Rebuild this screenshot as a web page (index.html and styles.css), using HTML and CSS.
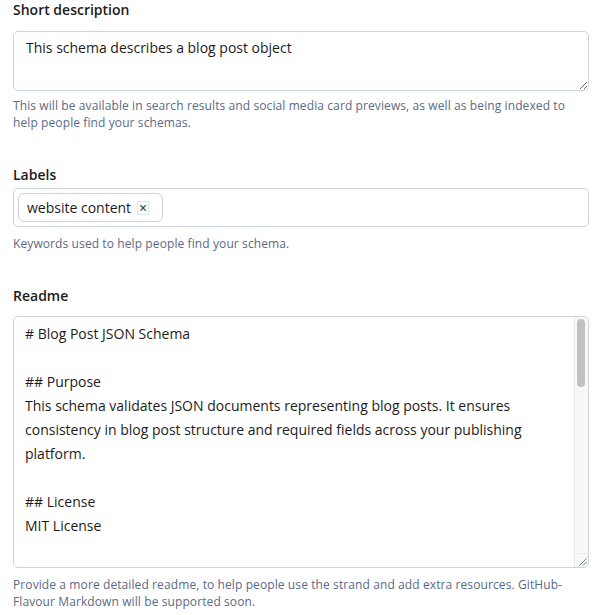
FILE: index.html
```html
<!DOCTYPE html>
<html lang="en">
<head>
<meta charset="utf-8">
<title>Schema details</title>
<link rel="stylesheet" href="styles.css">
</head>
<body>
<form class="form">
  <div class="field field-desc">
    <label class="label" for="desc">Short description</label>
    <textarea id="desc" class="input textarea-desc">This schema describes a blog post object</textarea>
    <p class="help">This will be available in search results and social media card previews, as well as being indexed to help people find your schemas.</p>
  </div>

  <div class="field field-labels">
    <label class="label" for="labels">Labels</label>
    <div class="input tag-input">
      <span class="tag">website content <span class="tag-remove">×</span></span>
      <input id="labels" class="tag-field" type="text">
    </div>
    <p class="help">Keywords used to help people find your schema.</p>
  </div>

  <div class="field field-readme">
    <label class="label" for="readme">Readme</label>
    <div class="input readme-box">
      <textarea id="readme" class="textarea-readme"># Blog Post JSON Schema

## Purpose
This schema validates JSON documents representing blog posts. It ensures consistency in blog post structure and required fields across your publishing platform.

## License
MIT License
</textarea>
      <div class="scrollbar" aria-hidden="true">
        <div class="scroll-track"><div class="scroll-thumb"></div></div>
        <div class="scroll-corner">
          <svg class="grip" width="9" height="9" viewBox="0 0 9 9">
            <path d="M8.5 1.5 L1.5 8.5 M8.5 5 L5 8.5" stroke="#7a7a7a" stroke-width="1" fill="none"/>
          </svg>
        </div>
      </div>
    </div>
    <p class="help">Provide a more detailed readme, to help people use the strand and add extra resources. GitHub-Flavour Markdown will be supported soon.</p>
  </div>
</form>
</body>
</html>
```

FILE: styles.css
```css
* {
  box-sizing: border-box;
}

html, body {
  margin: 0;
  padding: 0;
  background: #ffffff;
}

body {
  font-family: "Open Sans", "Noto Sans", sans-serif;
  color: #1c1c1c;
}

.form {
  padding: 0 19px 0 13px;
  margin: 0;
}

.field {
  display: flex;
  flex-direction: column;
}

.field-labels {
  margin-top: 34px;
}

.field-readme {
  margin-top: 34px;
}

.label {
  font-size: 14px;
  line-height: 20px;
  font-weight: 600;
  color: #1c1c1c;
}

.field-desc .label {
  margin-bottom: 11px;
}

.field-labels .label {
  margin-bottom: 3px;
}

.field-readme .label {
  margin-bottom: 10px;
}

.input {
  width: 100%;
  border: 1px solid #c9d3e1;
  border-radius: 5px;
  background: #ffffff;
  font-family: "Open Sans", "Noto Sans", sans-serif;
  font-size: 14px;
  color: #1c1c1c;
  margin: 0;
}

textarea.input {
  display: block;
  resize: vertical;
  outline: none;
}

.textarea-desc {
  height: 60px;
  padding: 6px 12px;
  line-height: 20px;
}

.readme-box {
  display: flex;
  height: 252px;
  overflow: hidden;
}

.textarea-readme {
  flex: 1;
  min-width: 0;
  height: 100%;
  border: none;
  outline: none;
  resize: none;
  overflow: hidden;
  padding: 5px 12px 6px 11px;
  margin: 0;
  font-family: "Open Sans", "Noto Sans", sans-serif;
  font-size: 14px;
  line-height: 24px;
  color: #1c1c1c;
  background: transparent;
}

.scrollbar {
  width: 14px;
  flex: none;
  display: flex;
  flex-direction: column;
  background: #f8f8f8;
  border-left: 1px solid #ebebeb;
}

.scroll-track {
  flex: 1;
  padding: 2px 2px 0 2px;
}

.scroll-thumb {
  width: 8px;
  height: 68px;
  background: #c1c1c1;
  border-radius: 4px;
}

.scroll-corner {
  height: 14px;
  border-top: 1px solid #ebebeb;
  display: flex;
  align-items: flex-end;
  justify-content: flex-end;
  padding: 0 1px 1px 0;
}

.grip {
  display: block;
}

.tag-input {
  height: 39px;
  display: flex;
  align-items: center;
  gap: 6px;
  padding: 0 4px;
}

.tag {
  display: inline-flex;
  align-items: center;
  height: 29px;
  padding: 0 13px 0 8px;
  border: 1px solid #c9d3e1;
  border-radius: 6px;
  font-size: 14px;
  line-height: 20px;
  color: #1c1c1c;
  white-space: nowrap;
}

.tag-remove {
  display: inline-flex;
  align-items: center;
  justify-content: center;
  width: 12px;
  height: 14px;
  margin-left: 6px;
  border: 1px solid #dde3ec;
  font-size: 14px;
  font-weight: 600;
  line-height: 1;
  color: #3a4a63;
}

.tag-field {
  flex: 1;
  border: none;
  outline: none;
  font-family: inherit;
  font-size: 14px;
  background: transparent;
  min-width: 0;
}

.help {
  margin: 6px 0 0;
  font-size: 12px;
  line-height: 17px;
  letter-spacing: 0.1px;
  color: #5a6a86;
}

.field-labels .help,
.field-readme .help {
  margin-top: 8px;
}
```
